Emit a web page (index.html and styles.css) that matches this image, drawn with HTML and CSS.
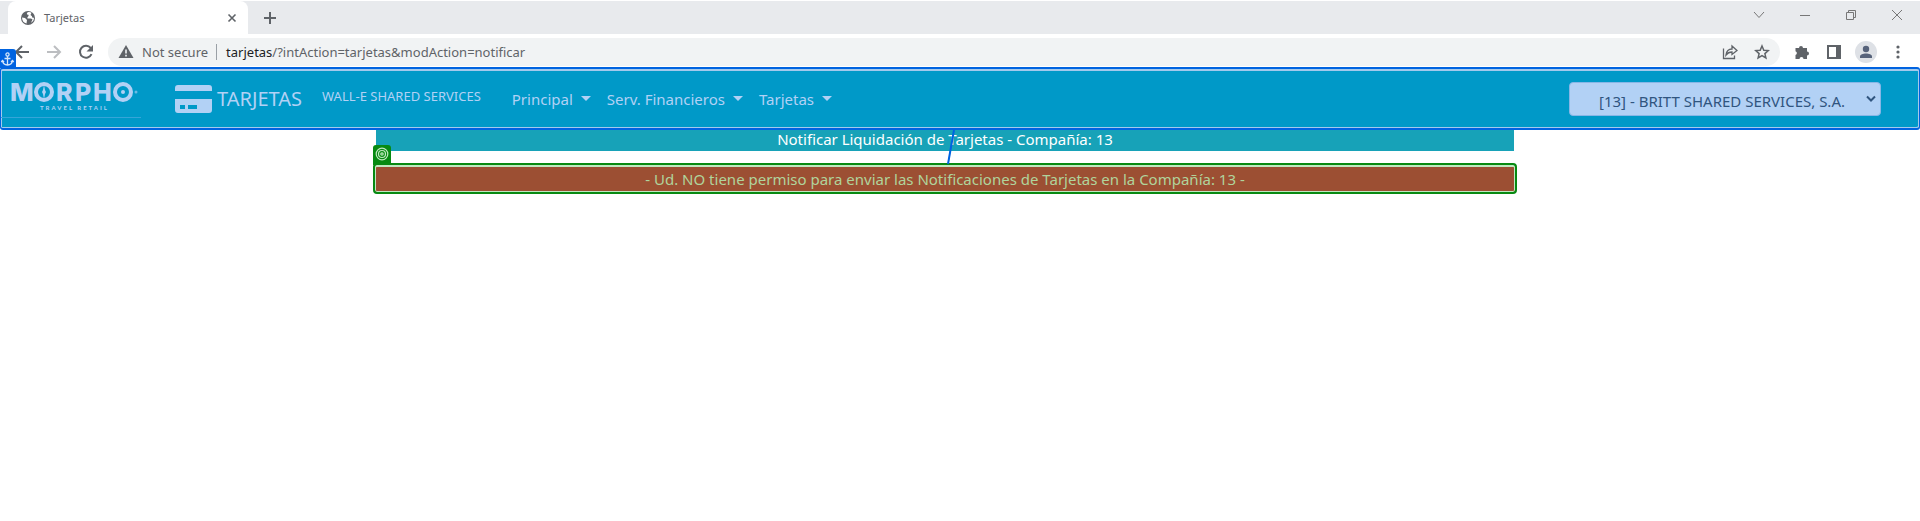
FILE: index.html
```html
<!DOCTYPE html>
<html lang="es">
<head>
<meta charset="utf-8">
<title>Tarjetas</title>
<link rel="stylesheet" href="styles.css">
</head>
<body>
<header class="browser">
  <div class="tabstrip">
    <div class="tab">
      <svg class="globe" viewBox="0 0 16 16" width="16" height="16"><circle cx="8" cy="8" r="7" fill="#5f6368"/><path d="M2 7.500l3 .5 2 2-.5 3.500C4 13 2 11 2 7.500zM8 2.200C6 3 7 5 8.500 4.800 9 7 7 6.500 7.500 8.500c2 0 4-.5 5 1L11 12.700c2-1 3-3 3-5-1 .3-2 0-2-1.500L10.500 5l1-2.200C10.500 2 9 2 8 2.200z" fill="#fff"/></svg>
      <span class="tab-title">Tarjetas</span>
      <button class="plain" aria-label="Cerrar pestaña"><svg viewBox="0 0 16 16" width="16" height="16"><path d="M4.500 4.500l7 7m0-7l-7 7" stroke="#5f6368" stroke-width="1.600"/></svg></button>
    </div>
    <button class="plain newtab" aria-label="Nueva pestaña"><svg viewBox="0 0 16 16" width="16" height="16"><path d="M8 2v12M2 8h12" stroke="#5f6368" stroke-width="2"/></svg></button>
    <div class="window-controls">
      <button class="plain" aria-label="Buscar pestañas"><svg viewBox="0 0 16 16" width="16" height="16"><path d="M3 5l5 5.500L13 5" fill="none" stroke="#777"/></svg></button>
      <button class="plain" aria-label="Minimizar"><svg viewBox="0 0 16 16" width="16" height="16"><path d="M3 8.500h10" stroke="#777"/></svg></button>
      <button class="plain" aria-label="Restaurar"><svg viewBox="0 0 16 16" width="16" height="16"><path d="M3.500 5.500h7v7h-7zM5.500 5.500v-2h7v7h-2" fill="none" stroke="#777"/></svg></button>
      <button class="plain" aria-label="Cerrar"><svg viewBox="0 0 16 16" width="16" height="16"><path d="M3 3l10 10M13 3L3 13" stroke="#777"/></svg></button>
    </div>
  </div>
  <div class="toolbar">
    <div class="history">
      <button class="plain" aria-label="Atrás"><svg viewBox="0 0 16 16" width="16" height="16"><path d="M15 8H2.500M8 2L2 8l6 6" fill="none" stroke="#5f6368" stroke-width="2"/></svg></button>
      <button class="plain" aria-label="Adelante"><svg viewBox="0 0 16 16" width="16" height="16"><path d="M1 8h12.500M8 2l6 6-6 6" fill="none" stroke="#bcbec1" stroke-width="2"/></svg></button>
      <button class="plain" aria-label="Recargar"><svg viewBox="0 0 16 16" width="16" height="16"><path d="M13.500 10.200A6 6 0 1 1 12.700 4" fill="none" stroke="#5f6368" stroke-width="2"/><path d="M15 1v6.500H8.500z" fill="#5f6368"/></svg></button>
    </div>
    <div class="omnibox">
      <svg class="warn" viewBox="0 0 16 16" width="16" height="16"><path d="M8 1l7.500 13H.5z" fill="#5f6368"/><path d="M8 5.500v4M8 10.700v1.800" stroke="#f1f3f4" stroke-width="1.600"/></svg>
      <span class="security">Not secure</span>
      <span class="url"><span class="host">tarjetas</span>/?intAction=tarjetas&amp;modAction=notificar</span>
      <button class="plain" aria-label="Compartir"><svg viewBox="0 0 16 16" width="16" height="16"><path d="M1.500 4.500v10h11v-3M4 11c.5-4 2.500-6 6-6V2l5 4.500-5 4V8C7.500 8 5.500 9 4 11z" fill="none" stroke="#5f6368" stroke-width="1.300"/></svg></button>
      <button class="plain" aria-label="Marcar"><svg viewBox="0 0 16 16" width="16" height="16"><path d="M8 2l1.800 4.200 4.500.4-3.400 3 1 4.400L8 11.700 4.100 14l1-4.400-3.400-3 4.500-.4z" fill="none" stroke="#5f6368" stroke-width="1.500"/></svg></button>
    </div>
    <div class="actions">
      <button class="plain" aria-label="Extensiones"><svg viewBox="0 0 16 16" width="16" height="16"><path d="M1.500 4H5a2 2 0 1 1 4 0h4v3.500a2 2 0 1 1 0 4V15H9.500a2 2 0 0 0-4 0h-4v-4a2 2 0 0 0 0-3.800z" fill="#5f6368"/></svg></button>
      <button class="plain" aria-label="Panel lateral"><svg viewBox="0 0 16 16" width="16" height="16"><path d="M1 1h14v14H1zM3 3v10h7V3z" fill="#5f6368" fill-rule="evenodd"/></svg></button>
      <button class="plain avatar" aria-label="Perfil"><svg viewBox="0 0 16 16" width="16" height="16"><circle cx="8" cy="5" r="3.200" fill="#56627a"/><path d="M2 14v-1.500c0-4 12-4 12 0V14z" fill="#56627a"/></svg></button>
      <button class="plain" aria-label="Menú"><svg viewBox="0 0 16 16" width="16" height="16"><g fill="#5f6368"><circle cx="8" cy="3" r="1.600"/><circle cx="8" cy="8" r="1.600"/><circle cx="8" cy="13" r="1.600"/></g></svg></button>
    </div>
  </div>
</header>
<nav class="navbar">
  <span class="anchor-badge"><svg viewBox="0 0 16 16" width="16" height="16"><g fill="none" stroke="#d5e6fb" stroke-width="1.300"><circle cx="7.500" cy="3.500" r="1.600"/><path d="M7.500 5.100V14M4.500 7.500h6M2.500 9.500c.3 3 2 4.300 5 4.500 3-.2 4.700-1.500 5-4.500M1.300 11l1.200-1.500L4.100 11M10.900 11l1.600-1.500 1.200 1.500"/></g></svg></span>
  <a class="logo" href="#" aria-label="Morpho Travel Retail">
    <svg viewBox="0 0 140 48" width="140" height="48">
      <g fill="#b2d1f5" font-family="Inter, sans-serif">
        <g font-size="25" font-weight="800"><text x="9" y="32">M</text><text x="55" y="32">R</text><text x="74" y="32">P</text><text x="92" y="32">H</text></g>
        <text x="39" y="41" font-family="Lato, sans-serif" font-size="6" font-weight="700" letter-spacing="2">TRAVEL RETAIL</text>
        <circle cx="135" cy="23" r="1.500" opacity=".6"/>
        <circle cx="122" cy="23" r="2"/>
        <path d="M43 16l1 5 1 2-1 2-1 5-1-5-1-2 1-2z"/>
      </g>
      <g fill="none" stroke="#b2d1f5" stroke-width="4"><circle cx="43" cy="23" r="8"/><circle cx="122" cy="23" r="8"/></g>
    </svg>
  </a>
  <a class="brand" href="#">
    <svg viewBox="0 0 37 28" width="37" height="28"><path d="M0 6V3a3 3 0 0 1 3-3h31a3 3 0 0 1 3 3v3zM0 14h37v11a3 3 0 0 1-3 3H3a3 3 0 0 1-3-3zM5 20v4h5v-4zM13 20v4h9v-4z" fill="#b2d1f5" fill-rule="evenodd"/></svg>
    <span>TARJETAS</span>
  </a>
  <span class="company">WALL-E SHARED SERVICES</span>
  <div class="menu">
    <button class="plain menu-item">Principal</button>
    <button class="plain menu-item">Serv. Financieros</button>
    <button class="plain menu-item">Tarjetas</button>
  </div>
  <div class="picker">
    <select aria-label="Compañía"><option>[13] - BRITT SHARED SERVICES, S.A.</option></select>
    <svg class="picker-arrow" viewBox="0 0 10 8" width="10" height="8"><path d="M1 1.500l4 4 4-4" fill="none" stroke="#30557f" stroke-width="2"/></svg>
  </div>
  <svg class="connector" viewBox="0 0 8 36" width="8" height="36"><path d="M7 1L1 35" stroke="#0063e0" stroke-width="2"/></svg>
</nav>
<main class="page">
  <div class="content">
    <h1 class="heading">Notificar Liquidación de Tarjetas - Compañía: 13</h1>
    <div class="alert" role="alert">
      <span class="target-badge"><svg viewBox="0 0 14 14" width="14" height="14"><g fill="none" stroke="#c0e8c0" stroke-width="1.200"><circle cx="7" cy="7" r="5.800"/><circle cx="7" cy="7" r="3.500"/><circle cx="7" cy="7" r="1.200"/></g></svg></span>
      - Ud. NO tiene permiso para enviar las Notificaciones de Tarjetas en la Compañía: 13 -
    </div>
  </div>
</main>
</body>
</html>
```

FILE: styles.css
```css
* { box-sizing: border-box; }
body { margin: 0; background: #fff; font-family: "Noto Sans", "Open Sans", sans-serif; font-size: 15px; line-height: 24px; }
svg { display: block; flex: none; }
.plain { display: flex; align-items: center; justify-content: center; padding: 0; border: 0; background: none; font: inherit; color: inherit; }
.tabstrip { display: flex; height: 34px; align-items: center; background: #e8eaed; border-top: 1px solid #fff; }
.tab { display: flex; align-items: center; gap: 8px; width: 240px; height: 33px; margin-left: 8px; padding: 0 8px 0 12px; background: #fff; border-radius: 8px 8px 0 0; }
.tab-title { flex: 1; font-size: 11px; color: #5f6368; }
.newtab { margin-left: 14px; }
.window-controls { display: flex; gap: 30px; margin-left: auto; padding: 0 15px 6px 0; }
.toolbar { display: flex; align-items: center; height: 33px; padding: 3px 14px 1px; background: #fff; }
.history { display: flex; gap: 16px; }
.omnibox { display: flex; flex: 1; align-items: center; height: 28px; margin-left: 14px; padding: 0 10px; border-radius: 14px; background: #f1f3f4; font-size: 13px; color: #5f6368; gap: 16px; }
.security { margin-left: -8px; padding-right: 8px; border-right: 1px solid #9aa0a6; line-height: 16px; }
.url { flex: 1; margin-left: -7px; }
.host { color: #202124; }
.actions { display: flex; align-items: center; gap: 16px; margin-left: 14px; }
.avatar { width: 22px; height: 22px; margin: 0 -3px; border-radius: 50%; background: #dee1e6; }
.navbar { position: relative; display: flex; align-items: center; height: 63px; padding-right: 38px; background: #0099c8; border: 2px solid #0063e0; border-left-width: 1px; border-right-width: 1px; border-radius: 3px; box-shadow: inset 0 2px #a4c9ec, inset 1px 0 #a4c9ec, inset -1px -1px #a4c9ec; color: #b2d1f5; }
.anchor-badge { position: absolute; left: -1px; top: -20px; padding: 2px 0 1px; background: #0063e0; border-radius: 0 3px 0 0; }
.logo { margin-bottom: 10px; border-bottom: 1px solid #36a5d8; }
.brand { display: flex; align-items: center; gap: 5px; margin-left: 34px; color: inherit; text-decoration: none; font-size: 20px; }
.company { margin-left: 20px; padding-bottom: 5px; font-size: 13px; }
.menu { display: flex; gap: 16px; margin-left: 31px; }
.menu-item::after { content: ""; margin-left: 8px; border: 5px solid transparent; border-top-color: currentColor; border-bottom: 0; }
.picker { position: relative; width: 312px; margin-left: auto; }
.picker select { display: block; width: 100%; height: 34px; padding: 4px 26px 0 29px; appearance: none; border: 1px solid #88b6e6; border-radius: 4px; background: #b2d1f5; color: #30557f; font: inherit; }
.picker-arrow { position: absolute; right: 5px; top: 13px; pointer-events: none; }
.connector { position: absolute; left: 946px; top: 60px; z-index: 2; }
.page { padding-right: 30px; }
.content { width: 100%; max-width: 1138px; margin: 0 auto; }
.heading { margin: 0; height: 21px; background: #17a2b8; color: #fff; font-size: 15px; font-weight: 400; line-height: 18px; text-align: center; }
.alert { position: relative; margin: 12px -3px 0; padding-top: 1px; border: 2px solid #078a12; border-radius: 4px; background: #9c4f33; box-shadow: inset 0 0 0 1px #c0e8c0, inset 0 2px #c0e8c0; color: #b0d49c; line-height: 26px; text-align: center; }
.target-badge { position: absolute; left: -2px; top: -20px; padding: 2px 2px 4px; background: #078a12; border-radius: 3px 3px 0 0; }
```
